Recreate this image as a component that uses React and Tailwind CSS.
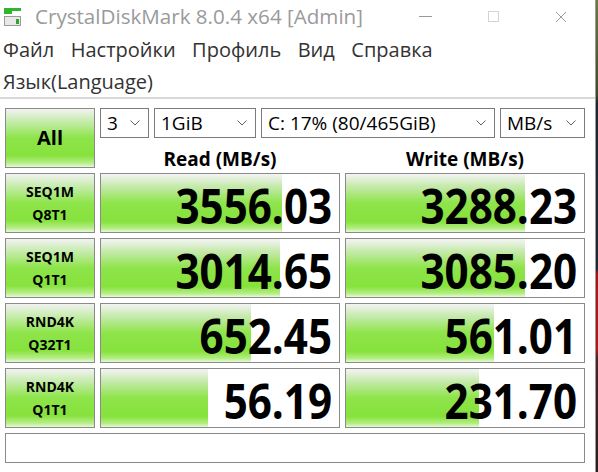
const rows = [
  { a: 'SEQ1M', b: 'Q8T1', read: '3556.03', readPct: 76, write: '3288.23', writePct: 75 },
  { a: 'SEQ1M', b: 'Q1T1', read: '3014.65', readPct: 75, write: '3085.20', writePct: 75 },
  { a: 'RND4K', b: 'Q32T1', read: '652.45', readPct: 63, write: '561.01', writePct: 62 },
  { a: 'RND4K', b: 'Q1T1', read: '56.19', readPct: 45, write: '231.70', writePct: 56 },
]

const ui = { fontFamily: '"Open Sans", "Noto Sans", sans-serif' }

function Chevron() {
  return (
    <svg width="10" height="6" viewBox="0 0 10 6" className="shrink-0">
      <polyline points="0.5,0.5 5,5 9.5,0.5" fill="none" stroke="#606060" strokeWidth="1" />
    </svg>
  )
}

function Select({ width, value }) {
  return (
    <div className={`${width} h-[30px] border border-[#7a7a7a] bg-white flex items-center justify-between pl-[6px] pr-[8px]`}>
      <span className="text-[19px] leading-none text-black">{value}</span>
      <Chevron />
    </div>
  )
}

function GreenButton({ children, className = '' }) {
  return (
    <div
      className={`border border-[#8a8a8a] bg-[linear-gradient(to_bottom,#f2f2f2_0%,#c4ecaa_22%,#8ee44a_50%,#86e23c_80%,#b6ee86_93%,#e6f8d8_100%)] flex flex-col items-center justify-center font-bold text-black ${className}`}
    >
      {children}
    </div>
  )
}

function Bar({ value, pct }) {
  return (
    <div className="relative h-[60px] border border-[#8a8a8a] bg-white">
      <div
        className="absolute left-0 top-0 bottom-0 bg-[linear-gradient(to_bottom,#f4f4f4_0%,#c8eab0_20%,#8ee44a_50%,#86e23c_82%,#b4ee84_94%,#e8f8dc_100%)]"
        style={{ width: `${pct}%` }}
      />
      <div className="relative h-full flex items-center justify-end pr-[7px] pt-[4px]">
        <span className="inline-block origin-right scale-x-[0.86] text-[49px] font-bold leading-none text-black">
          {value}
        </span>
      </div>
    </div>
  )
}

function AppIcon() {
  return (
    <svg width="20" height="20" viewBox="0 0 20 20">
      <rect x="1" y="1" width="17" height="3" fill="#2fb52f" />
      <rect x="1" y="4" width="8" height="3" fill="#2fb52f" />
      <rect x="1" y="9" width="17" height="10" fill="#9a9a9a" />
      <rect x="2" y="10" width="15" height="8" fill="#e8e8e8" />
      <rect x="13" y="12" width="3" height="5" fill="#2fa52f" />
    </svg>
  )
}

export default function App() {
  return (
    <div className="w-[598px] h-[472px] flex overflow-hidden" style={ui}>
      <div className="w-[595px] h-full bg-white flex flex-col">
        {/* title bar */}
        <div className="h-[33px] flex items-center">
          <div className="w-[35px] pl-[3px] flex items-center">
            <AppIcon />
          </div>
          <span className="text-[20.6px] text-[#9a9a9a] leading-none">CrystalDiskMark 8.0.4 x64 [Admin]</span>
          <div className="ml-auto flex items-center h-full">
            <div className="w-[68px] h-full flex items-center justify-center">
              <div className="w-[13px] h-[1px] bg-[#9a9a9a]" />
            </div>
            <div className="w-[68px] h-full flex items-center justify-center">
              <div className="w-[11px] h-[11px] border border-[#d4d4d4]" />
            </div>
            <div className="w-[68px] h-full flex items-center justify-center">
              <svg width="12" height="12" viewBox="0 0 12 12">
                <path d="M1 1L11 11M11 1L1 11" stroke="#9a9a9a" strokeWidth="1" />
              </svg>
            </div>
          </div>
        </div>

        {/* menu */}
        <div className="text-[20px] text-[#333] leading-none">
          <div className="h-[33px] flex items-center gap-[16.5px] pl-[3px]">
            <span>Файл</span>
            <span>Настройки</span>
            <span>Профиль</span>
            <span>Вид</span>
            <span>Справка</span>
          </div>
          <div className="h-[31px] flex items-center pl-[3px]">
            <span>Язык(Language)</span>
          </div>
        </div>
        <div className="h-[2px] bg-[#d9d9d9]" />

        {/* body */}
        <div className="pt-[9px] pl-[5px] flex flex-col gap-[5px]">
          <div className="flex gap-[5px]">
            <GreenButton className="w-[90px] h-[60px] text-[20px]">All</GreenButton>
            <div className="w-[485px] h-[60px] flex flex-col">
              <div className="flex justify-between">
                <Select width="w-[49px]" value="3" />
                <Select width="w-[102px]" value="1GiB" />
                <Select width="w-[234px]" value="C: 17% (80/465GiB)" />
                <Select width="w-[85px]" value="MB/s" />
              </div>
              <div className="flex gap-[5px] pt-[12px]">
                <div className="w-[240px] text-center text-[19px] font-bold leading-none text-black">Read (MB/s)</div>
                <div className="w-[240px] text-center text-[19px] font-bold leading-none text-black">Write (MB/s)</div>
              </div>
            </div>
          </div>

          {rows.map((r, i) => (
            <div key={i} className="flex gap-[5px]">
              <GreenButton className="w-[90px] h-[60px] text-[14px] leading-[23px]">
                <span>{r.a}</span>
                <span>{r.b}</span>
              </GreenButton>
              <div className="w-[240px]">
                <Bar value={r.read} pct={r.readPct} />
              </div>
              <div className="w-[240px]">
                <Bar value={r.write} pct={r.writePct} />
              </div>
            </div>
          ))}

          <div className="w-[580px] h-[30px] border border-[#8a8a8a] bg-white" />
        </div>
      </div>
      <div className="w-[3px] h-full border-l border-[#9a9a9a] bg-[linear-gradient(to_bottom,#6a7a40_0%,#3c4a2a_20%,#1a2632_22%,#1c2a38_57%,#a81414_58%,#b01818_74%,#4a2424_76%,#2a1c1c_100%)]" />
    </div>
  )
}
